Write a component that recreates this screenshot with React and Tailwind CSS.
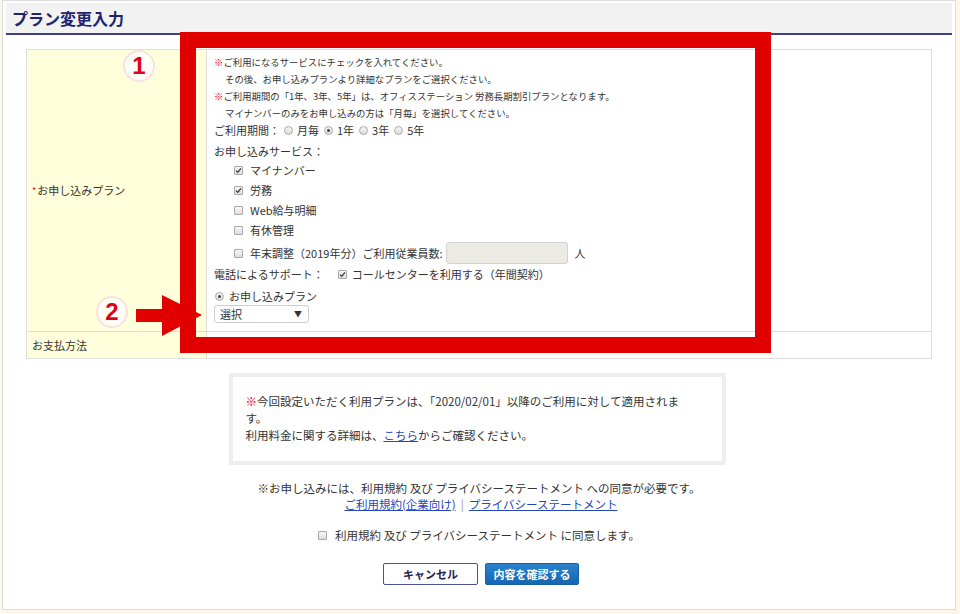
const jp = '[font-family:"Noto_Sans_CJK_JP","Noto_Sans",sans-serif]'

function Check({ on }) {
  return (
    <span className="inline-flex h-[9px] w-[9px] shrink-0 items-center justify-center rounded-[1px] border border-[#a9a9a9] bg-gradient-to-b from-[#f7f7f7] to-[#dedede]">
      {on && (
        <svg width="7" height="7" viewBox="0 0 7 7">
          <path d="M1 3.6 L2.8 5.4 L6 1.4" fill="none" stroke="#333" strokeWidth="1.3" />
        </svg>
      )}
    </span>
  )
}

function Radio({ on }) {
  return (
    <span className="inline-flex h-[9px] w-[9px] shrink-0 items-center justify-center rounded-full border border-[#aaa] bg-gradient-to-b from-[#f5f5f5] to-[#dcdcdc]">
      {on && <span className="h-[3px] w-[3px] rounded-full bg-[#444]" />}
    </span>
  )
}

function Num({ n, className }) {
  return (
    <div className={`absolute flex h-[32px] w-[32px] items-center justify-center rounded-full border-2 border-[#fbe0e0] bg-[#fffef6] ${className}`}>
      <span className="[font-family:'Liberation_Sans',sans-serif] text-[24px] font-bold leading-none text-[#e2001a]">{n}</span>
    </div>
  )
}

const services = [
  { label: 'マイナンバー', on: true },
  { label: '労務', on: true },
  { label: 'Web給与明細', on: false },
  { label: '有休管理', on: false },
]

export default function App() {
  return (
    <div className={`relative h-[614px] w-[960px] overflow-hidden bg-[#fdf6ea] pl-[2px] pr-[4px] ${jp} text-[#333]`}>
      <div className="flex h-[610px] flex-col border border-[#ddd] bg-white px-[3px] pt-[2px]">
        <div className="flex h-[32px] shrink-0 items-center border-b-2 border-[#3d3f8e] bg-[#f2f2f2] pl-[6px] text-[16px] font-bold text-[#1e2470]">
          プラン変更入力
        </div>

        <div className="mx-[20px] mt-[14px] grid grid-cols-[180px_1fr] border border-[#ddd]">
          <div className="flex h-[281px] items-center border-r border-[#ddd] bg-[#ffffdc] pl-[5px] text-[11px]">
            <span className="mr-[1px] text-[9px] text-[#e2001a]">*</span>お申し込みプラン
          </div>
          <div className="h-[281px] pl-[7px] pt-[4px]">
            <div className="text-[9.4px] leading-[17px]">
              <p><span className="text-[#e8000f]">※</span>ご利用になるサービスにチェックを入れてください。</p>
              <p className="pl-[11px]">その後、お申し込みプランより詳細なプランをご選択ください。</p>
              <p><span className="text-[#e8000f]">※</span>ご利用期間の「1年、3年、5年」は、オフィスステーション 労務長期割引プランとなります。</p>
              <p className="pl-[11px]">マイナンバーのみをお申し込みの方は「月毎」を選択してください。</p>
            </div>
            <div className="flex items-center text-[11px] leading-[17px]">
              <span>ご利用期間：</span>
              <span className="ml-[4px] flex items-center gap-[4px]"><Radio />月毎</span>
              <span className="ml-[5px] flex items-center gap-[4px]"><Radio on />1年</span>
              <span className="ml-[5px] flex items-center gap-[4px]"><Radio />3年</span>
              <span className="ml-[5px] flex items-center gap-[4px]"><Radio />5年</span>
            </div>
            <p className="mt-[4px] text-[11px] leading-[17px]">お申し込みサービス：</p>
            <div className="pl-[20px] text-[11px]">
              {services.map(s => (
                <div key={s.label} className="flex h-[20px] items-center gap-[7px]">
                  <Check on={s.on} />
                  <span>{s.label}</span>
                </div>
              ))}
              <div className="flex h-[26px] items-center gap-[7px]">
                <Check />
                <span>年末調整（2019年分）ご利用従業員数:</span>
                <span className="ml-[-3px] h-[22px] w-[122px] rounded-[3px] border border-[#d3d3d3] bg-[#ebebe4]" />
                <span className="ml-[-1px]">人</span>
              </div>
            </div>
            <div className="flex items-center text-[11px] leading-[17px]">
              <span>電話によるサポート：</span>
              <span className="ml-[14px] flex items-center gap-[5px]"><Check on />コールセンターを利用する（年間契約）</span>
            </div>
            <div className="mt-[5px] flex items-center gap-[5px] pl-[1px] text-[11px] leading-[17px]">
              <Radio on />お申し込みプラン
            </div>
            <div className="flex h-[18px] w-[95px] items-center justify-between rounded-[3px] border border-[#ccc] bg-white pl-[5px] pr-[6px] text-[11px]">
              <span>選択</span>
              <span className="text-[8px]">▼</span>
            </div>
          </div>
          <div className="flex h-[27px] items-center border-r border-t border-[#ddd] bg-[#ffffdc] pl-[5px] text-[11px]">
            お支払方法
          </div>
          <div className="h-[27px] border-t border-[#ddd]" />
        </div>

        <div className="mx-auto mt-[14px] h-[92px] w-[497px] translate-x-[-2px] border-4 border-[#eee] bg-white pl-[13px] pt-[16px] text-[11.5px] leading-[17px]">
          <p><span className="text-[#e8000f]">※</span>今回設定いただく利用プランは、「2020/02/01」以降のご利用に対して適用されま<br />す。</p>
          <p>利用料金に関する詳細は、<span className="text-[#2346b8] underline">こちら</span>からご確認ください。</p>
        </div>

        <div className="mt-[15px] text-center text-[11.5px] leading-[17px]">
          <p>※お申し込みには、利用規約 及び プライバシーステートメント への同意が必要です。</p>
          <p className="pl-[4px] leading-[15px]">
            <span className="text-[#2346b8] underline">ご利用規約(企業向け)</span>
            <span className="mx-[5px] text-[#999]">|</span>
            <span className="text-[#2346b8] underline">プライバシーステートメント</span>
          </p>
        </div>

        <div className="mt-[15px] flex items-center justify-center gap-[8px] text-[11.5px] leading-[17px]">
          <Check />
          <span>利用規約 及び プライバシーステートメント に同意します。</span>
        </div>

        <div className="mt-[19px] flex justify-center gap-[7px] pl-[4px]">
          <button className="h-[22px] w-[95px] rounded-[2px] border border-[#4a5396] bg-white text-[11px] font-bold text-[#1f2250]">
            キャンセル
          </button>
          <button className="h-[22px] w-[94px] rounded-[2px] border border-[#1560a8] bg-gradient-to-b from-[#2a82cc] to-[#1667b3] text-[11px] font-bold text-white">
            内容を確認する
          </button>
        </div>
      </div>

      <div className="absolute left-[180px] top-[32px] h-[321px] w-[591px] border-[16px] border-[#e00000]" />
      <Num n="1" className="left-[123px] top-[50px]" />
      <Num n="2" className="left-[96px] top-[296px]" />
      <svg className="absolute left-[136px] top-[294px]" width="68" height="44" viewBox="0 0 68 44">
        <polygon points="0,15 26,15 26,1 66,21 26,42 26,28 0,28" fill="#e00000" />
      </svg>
    </div>
  )
}
